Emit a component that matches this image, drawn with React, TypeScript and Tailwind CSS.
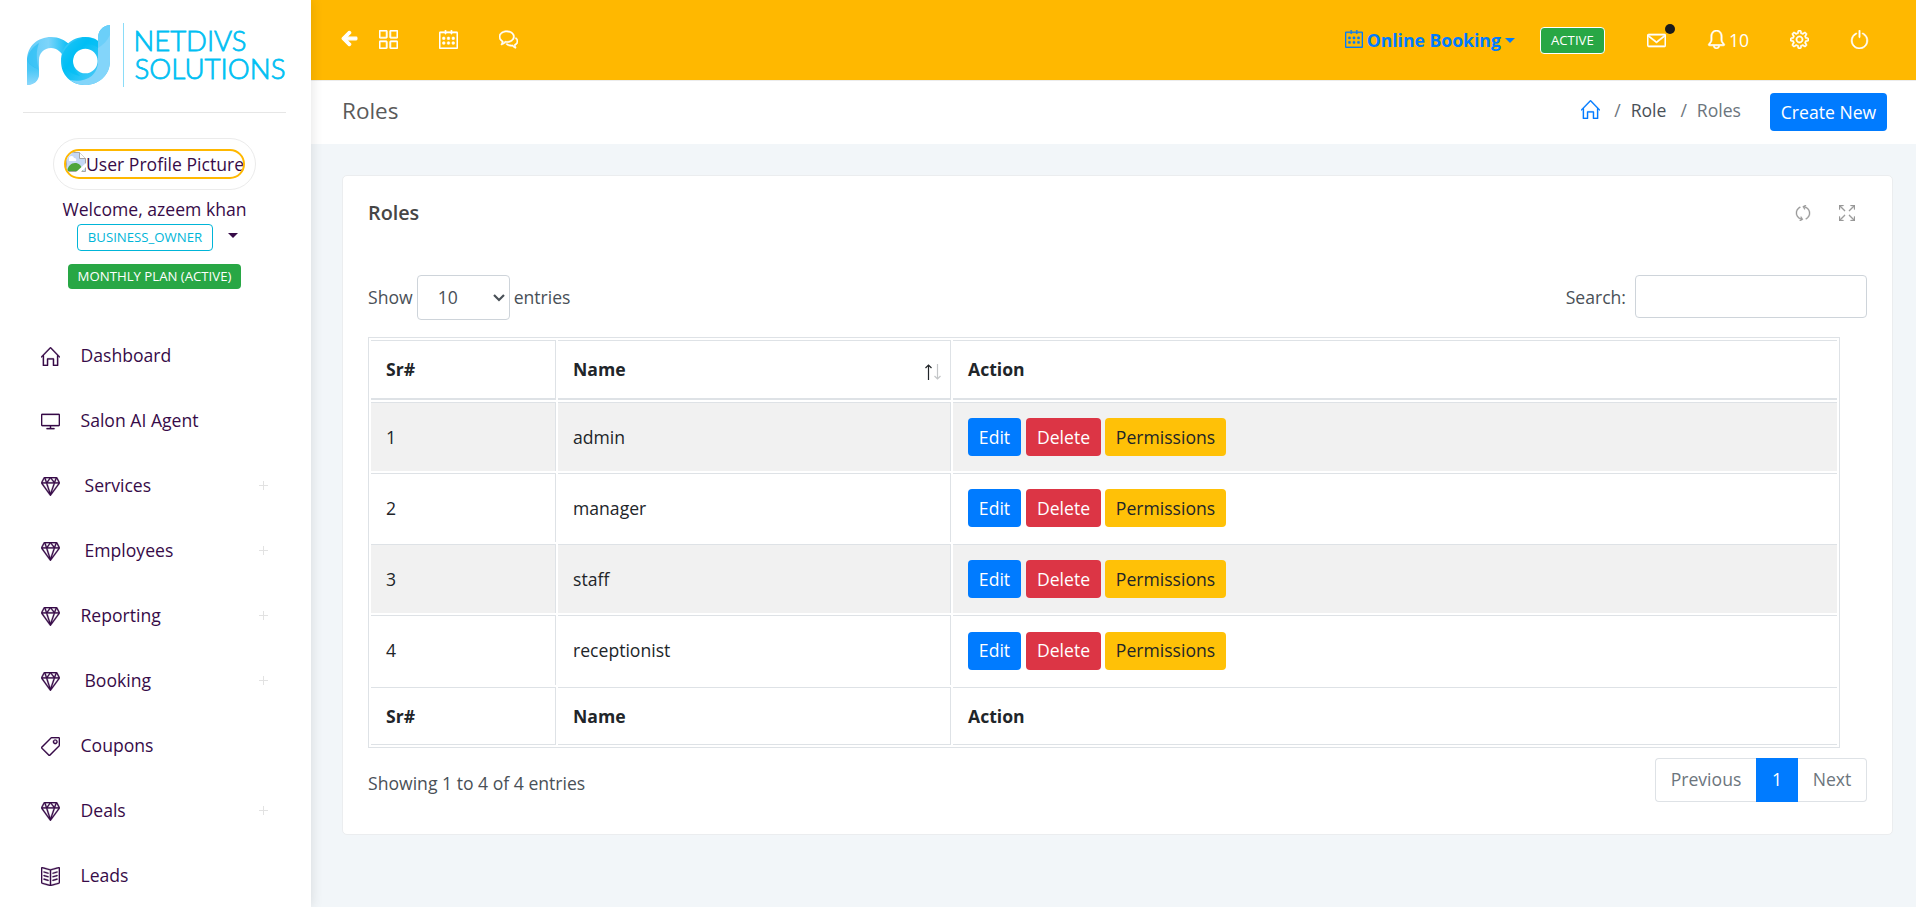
import { ReactNode, useState } from "react";

import { FaArrowLeft } from "react-icons/fa";
import {
    SlBell,
    SlBookOpen,
    SlBubbles,
    SlCalender,
    SlDiamond,
    SlEnvolope,
    SlGrid,
    SlHome,
    SlPower,
    SlRefresh,
    SlScreenDesktop,
    SlSettings,
    SlSizeFullscreen,
    SlTag,
} from "react-icons/sl";

interface NavEntry {
    label: string;
    icon: ReactNode;
    expandable?: boolean;
    indent?: boolean;
}

const navEntries: NavEntry[] = [
    { label: "Dashboard", icon: <SlHome /> },
    { label: "Salon AI Agent", icon: <SlScreenDesktop /> },
    { label: "Services", icon: <SlDiamond />, expandable: true, indent: true },
    { label: "Employees", icon: <SlDiamond />, expandable: true, indent: true },
    { label: "Reporting", icon: <SlDiamond />, expandable: true },
    { label: "Booking", icon: <SlDiamond />, expandable: true, indent: true },
    { label: "Coupons", icon: <SlTag /> },
    { label: "Deals", icon: <SlDiamond />, expandable: true },
    { label: "Leads", icon: <SlBookOpen /> },
];

const roles = ["admin", "manager", "staff", "receptionist"];

const App = function () {
    return (
        <div className="flex h-screen overflow-hidden bg-[#f2f6f9] font-['Open_Sans',sans-serif] text-[17.6px] leading-[27px] text-[#495057]">
            <Sidebar />
            <div className="flex min-w-0 flex-1 flex-col">
                <TopBar />
                <PageHeader />
                <main className="pt-[31px] pr-[23px] pl-[31px]">
                    <RolesCard />
                </main>
            </div>
        </div>
    );
};

const Sidebar = function () {
    return (
        <aside className="z-10 flex w-[311px] shrink-0 flex-col bg-white text-[#370b48] shadow-[0_0_12px_rgba(0,0,0,0.12)]">
            <div className="mr-[25px] ml-[23px] flex h-[113px] shrink-0 border-b border-[#e6e6e6] pt-[22px]">
                <Logo />
            </div>
            <div className="flex flex-col items-center pr-[2px]">
                <div className="mt-[25px] flex h-[52px] w-[203px] items-center justify-center rounded-full border border-[#ebebeb]">
                    <div className="flex h-[30px] w-[181px] items-center overflow-hidden rounded-full border-2 border-[#ffb800] whitespace-nowrap">
                        <BrokenImage />
                        <span>User Profile Picture</span>
                    </div>
                </div>
                <div className="mt-[6px]">Welcome, azeem khan</div>
                <div className="mt-px flex items-center gap-[15px] pl-[6px]">
                    <span className="flex h-[27px] w-[136px] items-center justify-center rounded-[4px] border border-[#00b5d8] text-[13.2px] text-[#00b5d8]">
                        BUSINESS_OWNER
                    </span>
                    <Caret className="-mt-1" />
                </div>
                <span className="mt-[13px] flex h-[25px] w-[173px] items-center justify-center rounded-[4px] bg-[#28a745] text-[13.2px] font-medium text-white">
                    MONTHLY PLAN (ACTIVE)
                </span>
            </div>
            <nav className="mt-[34px] flex flex-col">
                {navEntries.map((entry) => (
                    <NavItem key={entry.label} {...entry} />
                ))}
            </nav>
        </aside>
    );
};

const NavItem = function (props: NavEntry) {
    return (
        <a className="flex h-[65px] shrink-0 items-center pr-[43px] pl-[41px]">
            <span className="w-[39.500px] pt-px text-[19px] [&>svg]:[stroke-width:16]">{props.icon}</span>
            <span className={props.indent ? "pl-[4px]" : ""}>{props.label}</span>
            {props.expandable && (
                <svg className="ml-auto" width="9" height="9" viewBox="0 0 9 9" stroke="#e2e2e2">
                    <path d="M4.5 0v9M0 4.5h9" />
                </svg>
            )}
        </a>
    );
};

const Caret = function ({ className }: { className?: string }) {
    return (
        <svg className={className} width="10" height="5" viewBox="0 0 10 5" fill="currentColor">
            <path d="M0 0h10L5 5z" />
        </svg>
    );
};

const Logo = function () {
    return (
        <svg className="shrink-0" width="263" height="66" viewBox="23 22 263 66">
            <defs>
                <linearGradient id="stem" x1="0" y1="0" x2="0" y2="1">
                    <stop offset="0" stopColor="#3fc4f6" />
                    <stop offset="0.45" stopColor="#4cc8f7" />
                    <stop offset="1" stopColor="#8ed8fb" />
                </linearGradient>
                <linearGradient id="arch" x1="0" y1="0" x2="1" y2="0">
                    <stop offset="0" stopColor="#5fcbf8" />
                    <stop offset="0.5" stopColor="#7dd4fa" />
                    <stop offset="1" stopColor="#03bdf5" />
                </linearGradient>
                <linearGradient id="bowl" x1="0" y1="0" x2="1" y2="1">
                    <stop offset="0" stopColor="#7bd3fa" />
                    <stop offset="0.4" stopColor="#00bff5" />
                    <stop offset="1" stopColor="#6acef9" />
                </linearGradient>
            </defs>
            <path d="M27 60C27 46 38 37 51 37c8 0 14 3 19 8l-6 12c-3-5-7-9-13-9-7 0-12 5-12 12v13c0 7-5 12-12 12z" fill="url(#arch)" />
            <path d="M27 58c1 6 6 8 12 12v4c0 7-5 11-12 11z" fill="url(#stem)" />
            <path d="M27 59c2-8 7-13 12-16-3 8-3 15 0 27-6-3-11-6-12-11z" fill="#12b9f3" opacity="0.5" />
            <path
                fillRule="evenodd"
                d="M61 61c0-14 10-24 24-24 5 0 9 1 13 4V39c0-8 4-13 12-14v36c0 14-11 24-25 24S61 75 61 61zm12 0a12.300 12.300 0 1 0 24.600 0 12.300 12.300 0 1 0-24.600 0z"
                fill="url(#bowl)"
            />
            <path d="M98 39c0-8 4-13 12-14v36c0 14-11 24-25 24-6 0-11-2-15-5 14 3 28-3 28-19z" fill="#83d5fa" />
            <path d="M98 39c0-8 4-13 12-14v10c-3 6-7 10-12 13z" fill="#5ccbf8" opacity="0.6" />
            <path d="M62 56c4-12 14-17 24-19 5 0 9 1 12 4v7c-6-6-17-4-22 4-6 9-3 18 4 24-11-2-18-9-18-20z" fill="#00bdf4" opacity="0.55" />
            <path d="M123.500 23v64" stroke="#8adcf8" />
            <g fill="#00bff3" fontFamily="Lato" fontWeight="300" fontSize="27.500" stroke="#00bff3" strokeWidth="0.800">
                <text x="133.500" y="50.500" textLength="113" lengthAdjust="spacingAndGlyphs">
                    NETDIVS
                </text>
                <text x="134.500" y="78.500" textLength="151" lengthAdjust="spacingAndGlyphs">
                    SOLUTIONS
                </text>
            </g>
        </svg>
    );
};

const BrokenImage = function () {
    return (
        <svg className="-mt-[5px] shrink-0" width="20" height="20" viewBox="0 0 20 20">
            <path d="M.5.5h13l6 6v13H.5z" fill="#c6d8f4" stroke="#a5a5a5" />
            <path d="M13.500.5v6h6" fill="#fff" stroke="#a5a5a5" />
            <path d="M3 7a2.500 2.500 0 0 1 5-1 2 2 0 0 1 2 3H3z" fill="#fff" />
            <path d="M1 19c1-5 4-8 8-8s6 2 8 8z" fill="#4fa53a" />
            <path d="M10 20 20 11v4l-5 5z" fill="#fff" />
        </svg>
    );
};

const TopBar = function () {
    return (
        <header className="flex h-[80px] shrink-0 items-center justify-between bg-[#ffb800] text-white">
            <div className="flex items-center pb-[2px] pl-[30px] text-[19px] [&>svg]:[stroke-width:34]">
                <FaArrowLeft className="-mt-[2px] text-[17px]" />
                <SlGrid className="ml-[21px]" />
                <SlCalender className="ml-[41px]" />
                <SlBubbles className="ml-[41px]" />
            </div>
            <div className="flex items-center pr-[47px] [&>svg]:[stroke-width:34]">
                <div className="flex items-center font-bold text-[#007bff]">
                    <SlCalender className="-mt-[2px] mr-[4px] text-[18px] [stroke-width:20]" />
                    Online Booking
                    <Caret className="ml-[4px]" />
                </div>
                <span className="ml-[25px] flex h-[27px] w-[65px] items-center justify-center rounded-[4px] border border-white bg-[#28a745] text-[13.2px] font-medium">
                    ACTIVE
                </span>
                <span className="relative ml-[42px]">
                    <SlEnvolope className="text-[19px] [stroke-width:34]" />
                    <span className="absolute -top-[7px] left-[18px] size-[10px] rounded-full bg-[#1b1b1b]" />
                </span>
                <SlBell className="-mt-[2px] ml-[41px] text-[19px]" />
                <span className="ml-[3px]">10</span>
                <SlSettings className="-mt-[2px] ml-[41px] text-[19px]" />
                <SlPower className="-mt-[2px] ml-[41px] text-[19px]" />
            </div>
        </header>
    );
};

const PageHeader = function () {
    return (
        <div className="flex h-[64px] shrink-0 items-center justify-between border-t border-[#ececec] bg-white pr-[29px] pb-px pl-[31px]">
            <h1 className="-mt-[4px] text-[22.500px] text-[#5a5a5a]">Roles</h1>
            <div className="flex items-center text-[#6c757d]">
                <div className="-mt-[4px] flex items-center">
                    <SlHome className="-mt-px text-[19px] text-[#007bff] [stroke-width:14]" />
                    <span className="ml-[14px]">/</span>
                    <span className="ml-[10px] text-[#495057]">Role</span>
                    <span className="ml-[14px]">/</span>
                    <span className="ml-[10px]">Roles</span>
                </div>
                <button className="ml-[29px] h-[38px] w-[117px] rounded-[4px] bg-[#007bff] text-white">Create New</button>
            </div>
        </div>
    );
};

const RolesCard = function () {
    const [search, setSearch] = useState("");

    return (
        <section className="h-[660px] rounded-[5px] border border-[#ebedef] bg-white px-[25px]">
            <div className="flex h-[74px] items-center justify-between pr-[12px]">
                <h2 className="-mt-px text-[19.800px] font-semibold text-[#464646]">Roles</h2>
                <div className="flex gap-[28px] text-[16px] text-[#999] [&>svg]:[stroke-width:24]">
                    <SlRefresh />
                    <SlSizeFullscreen />
                </div>
            </div>
            <div className="mt-[25px] flex items-start justify-between">
                <label className="flex items-center gap-[4px]">
                    Show
                    <span className="flex h-[45px] w-[93px] items-center justify-between rounded-[4px] border border-[#ced4da] pr-[4px] pl-[20px]">
                        10
                        <svg width="12" height="8" viewBox="0 0 12 8" fill="none" stroke="#495057" strokeWidth="2.200">
                            <path d="m1 1 5 5 5-5" />
                        </svg>
                    </span>
                    entries
                </label>
                <label className="flex items-center gap-[9px]">
                    <span className="pt-[2px]">Search:</span>
                    <input
                        className="h-[43px] w-[232px] rounded-[4px] border border-[#ced4da] px-3 outline-none"
                        value={search}
                        onChange={(event) => setSearch(event.target.value)}
                    />
                </label>
            </div>
            <RolesTable filter={search} />
            <div className="mt-[10px] flex items-start justify-between">
                <div className="pt-[12px]">Showing 1 to 4 of 4 entries</div>
                <div className="flex h-[44px] text-[#6c757d]">
                    <span className="flex w-[101px] items-center justify-center rounded-l-[4px] border border-r-0 border-[#dee2e6] pb-[2px]">
                        Previous
                    </span>
                    <span className="flex w-[42px] items-center justify-center bg-[#007bff] pb-[2px] text-white">1</span>
                    <span className="flex w-[69px] items-center justify-center rounded-r-[4px] border border-l-0 border-[#dee2e6] pb-[2px]">
                        Next
                    </span>
                </div>
            </div>
        </section>
    );
};

const RolesTable = function ({ filter }: { filter: string }) {
    const visible = roles.filter((role) => role.includes(filter));

    return (
        <table className="mt-[17px] w-[1472px] table-fixed border-separate border-spacing-[2px] border border-[#dee2e6] text-left text-[#212529]">
            <colgroup>
                <col className="w-[185px]" />
                <col className="w-[393px]" />
                <col />
            </colgroup>
            <thead>
                <tr className="h-[60px]">
                    <th className="border-t border-r border-b-2 border-[#dee2e6] px-[15px]">Sr#</th>
                    <th className="border-t border-r border-b-2 border-[#dee2e6] pr-[9px] pl-[15px]">
                        <div className="flex items-center justify-between">
                            Name
                            <SortArrows />
                        </div>
                    </th>
                    <th className="border-t border-b-2 border-[#dee2e6] px-[15px]">Action</th>
                </tr>
            </thead>
            <tbody>
                {visible.map((role, index) => (
                    <tr key={role} className="h-[69px] odd:bg-[#f1f1f1] last:h-[70px]">
                        <td className="border-t border-r border-[#dee2e6] px-[15px]">{index + 1}</td>
                        <td className="border-t border-r border-[#dee2e6] px-[15px]">{role}</td>
                        <td className="border-t border-[#dee2e6] px-[15px]">
                            <div className="flex">
                                <button className="h-[38px] w-[53px] rounded-[4px] bg-[#007bff] text-white">Edit</button>
                                <button className="ml-[5px] h-[38px] w-[75px] rounded-[4px] bg-[#dc3545] text-white">Delete</button>
                                <button className="ml-[4px] h-[38px] w-[121px] rounded-[4px] bg-[#ffc107]">Permissions</button>
                            </div>
                        </td>
                    </tr>
                ))}
            </tbody>
            <tfoot>
                <tr className="h-[58px]">
                    <th className="border-t border-r border-b border-[#dee2e6] px-[15px]">Sr#</th>
                    <th className="border-t border-r border-b border-[#dee2e6] px-[15px]">Name</th>
                    <th className="border-t border-b border-[#dee2e6] px-[15px]">Action</th>
                </tr>
            </tfoot>
        </table>
    );
};

const SortArrows = function () {
    return (
        <svg className="mt-[4px]" width="16" height="16" viewBox="0 0 16 16" fill="none">
            <path d="M3.500 16V1M0.500 4l3-3 3 3" stroke="#212529" strokeWidth="1.200" />
            <path d="M12.500 0v15M9.500 12l3 3 3-3" stroke="#c4c6c8" strokeWidth="1.200" />
        </svg>
    );
};

export default App;
